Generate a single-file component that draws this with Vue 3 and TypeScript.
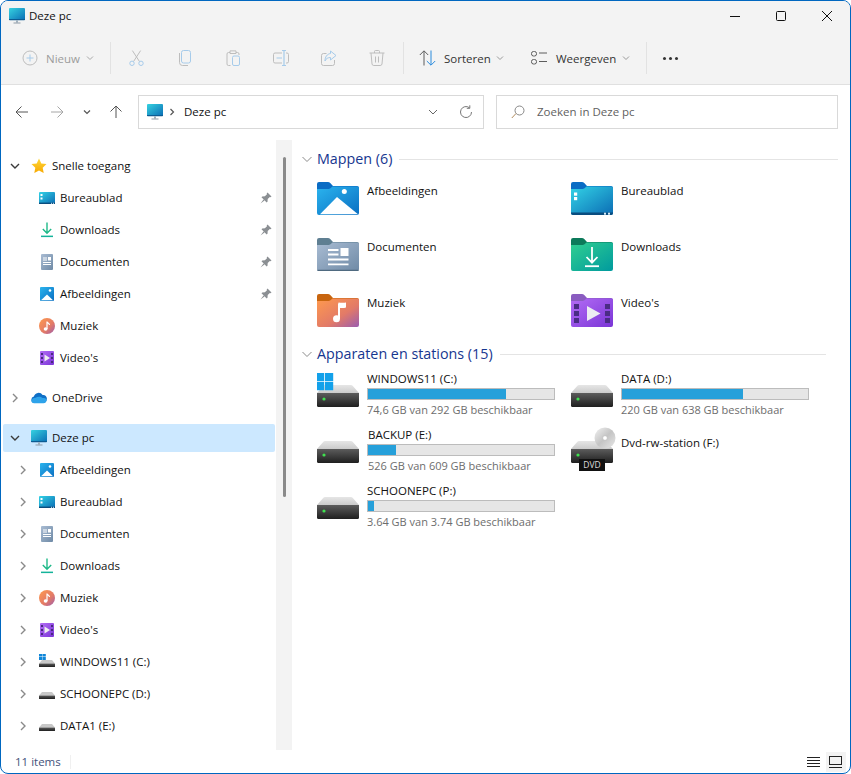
<script setup lang="ts">
interface TreeRow {
  label: string
  icon: string
  level: 0 | 1
  arrow?: 'down' | 'right'
  pinned?: boolean
  selected?: boolean
}

interface Drive {
  name: string
  icon: string
  used?: number
  info?: string
  nudge?: boolean
}

const tools = ['t-cut', 't-copy', 't-paste', 't-rename', 't-share', 't-delete']

const tree: TreeRow[][] = [
  [
    { label: 'Snelle toegang', icon: 's-star', level: 0, arrow: 'down' },
    { label: 'Bureaublad', icon: 's-desktop', level: 1, pinned: true },
    { label: 'Downloads', icon: 's-download', level: 1, pinned: true },
    { label: 'Documenten', icon: 's-doc', level: 1, pinned: true },
    { label: 'Afbeeldingen', icon: 's-pic', level: 1, pinned: true },
    { label: 'Muziek', icon: 's-music', level: 1 },
    { label: "Video's", icon: 's-video', level: 1 }
  ],
  [{ label: 'OneDrive', icon: 's-cloud', level: 0, arrow: 'right' }],
  [
    { label: 'Deze pc', icon: 's-pc', level: 0, arrow: 'down', selected: true },
    { label: 'Afbeeldingen', icon: 's-pic', level: 1, arrow: 'right' },
    { label: 'Bureaublad', icon: 's-desktop', level: 1, arrow: 'right' },
    { label: 'Documenten', icon: 's-doc', level: 1, arrow: 'right' },
    { label: 'Downloads', icon: 's-download', level: 1, arrow: 'right' },
    { label: 'Muziek', icon: 's-music', level: 1, arrow: 'right' },
    { label: "Video's", icon: 's-video', level: 1, arrow: 'right' },
    { label: 'WINDOWS11 (C:)', icon: 's-drive-win', level: 1, arrow: 'right' },
    { label: 'SCHOONEPC (D:)', icon: 's-drive', level: 1, arrow: 'right' },
    { label: 'DATA1 (E:)', icon: 's-drive', level: 1, arrow: 'right' }
  ]
]

const folders = [
  { name: 'Afbeeldingen', icon: 'f-pictures' },
  { name: 'Bureaublad', icon: 'f-desktop' },
  { name: 'Documenten', icon: 'f-docs' },
  { name: 'Downloads', icon: 'f-downloads' },
  { name: 'Muziek', icon: 'f-music' },
  { name: "Video's", icon: 'f-videos' }
]

const drives: Drive[] = [
  { name: 'WINDOWS11 (C:)', icon: 'd-win', used: 74, info: '74,6 GB van 292 GB beschikbaar' },
  { name: 'DATA (D:)', icon: 'd-plain', used: 65, info: '220 GB van 638 GB beschikbaar' },
  { name: 'BACKUP (E:)', icon: 'd-plain', used: 15, info: '526 GB van 609 GB beschikbaar', nudge: true },
  { name: 'Dvd-rw-station (F:)', icon: 'd-dvd' },
  { name: 'SCHOONEPC (P:)', icon: 'd-plain', used: 3, info: '3.64 GB van 3.74 GB beschikbaar' }
]
</script>

<template>
  <svg class="defs" aria-hidden="true">
    <defs>
      <linearGradient id="g-screen" x1="0" y1="0" x2="1" y2="1"><stop offset="0" stop-color="#36d2e0" /><stop offset="1" stop-color="#0a6db5" /></linearGradient>
      <linearGradient id="g-blue" x1="0" y1="0" x2="1" y2="1"><stop offset="0" stop-color="#2bb4ee" /><stop offset="1" stop-color="#0a6fc2" /></linearGradient>
      <linearGradient id="g-desk" x1="0" y1="0" x2="1" y2="1"><stop offset="0" stop-color="#33d3e6" /><stop offset="1" stop-color="#0b6cb4" /></linearGradient>
      <linearGradient id="g-doc" x1="0" y1="0" x2="1" y2="1"><stop offset="0" stop-color="#a9bcd3" /><stop offset="1" stop-color="#6f8aa6" /></linearGradient>
      <linearGradient id="g-green" x1="0" y1="0" x2="1" y2="1"><stop offset="0" stop-color="#30cf90" /><stop offset="1" stop-color="#009a9e" /></linearGradient>
      <linearGradient id="g-music" x1="0" y1="0" x2="1" y2="1"><stop offset="0" stop-color="#ff9a4d" /><stop offset=".6" stop-color="#e27a68" /><stop offset="1" stop-color="#9a5cb0" /></linearGradient>
      <linearGradient id="g-video" x1="0" y1="0" x2="1" y2="1"><stop offset="0" stop-color="#b36cf5" /><stop offset="1" stop-color="#7a35d6" /></linearGradient>
      <linearGradient id="g-hdd" x1="0" y1="0" x2="0" y2="1"><stop offset="0" stop-color="#5c5c5c" /><stop offset="1" stop-color="#1f1f1f" /></linearGradient>
      <linearGradient id="g-hddtop" x1="0" y1="0" x2="0" y2="1"><stop offset="0" stop-color="#e6e6e6" /><stop offset="1" stop-color="#cbcbcb" /></linearGradient>
      <linearGradient id="g-disc" x1="0" y1="0" x2="1" y2="1"><stop offset="0" stop-color="#f2f2f2" /><stop offset=".5" stop-color="#c4c4c4" /><stop offset="1" stop-color="#e8e8e8" /></linearGradient>
      <linearGradient id="g-star" x1="0" y1="0" x2="0" y2="1"><stop offset="0" stop-color="#ffd83a" /><stop offset="1" stop-color="#f7a800" /></linearGradient>

      <!-- toolbar -->
      <symbol id="t-cut" viewBox="0 0 16 16">
        <g fill="none"><path d="M4.6 11.4 11.6 .6M10.4 11.4 3.4 .6" stroke="#bdbdbd" /><circle cx="3" cy="13.3" r="2.2" stroke="#a6cbea" /><circle cx="12" cy="13.3" r="2.2" stroke="#a6cbea" /></g>
      </symbol>
      <symbol id="t-copy" viewBox="0 0 16 16">
        <g fill="none"><rect x="4.5" y=".5" width="9" height="12.5" rx="2" stroke="#a6cbea" /><path d="M2.5 3v9.5a3 3 0 0 0 3 3h5.5" stroke="#bdbdbd" /></g>
      </symbol>
      <symbol id="t-paste" viewBox="0 0 16 16">
        <g fill="none"><path d="M5 2.5H3.5a1.5 1.5 0 0 0-1.5 1.5v10a1.5 1.5 0 0 0 1.5 1.5h2M11 2.5h1.500a1.500 1.500 0 0 1 1.500 1.500v1M5 .9h6v2.600H5z" stroke="#bdbdbd" /><rect x="7.500" y="6" width="7" height="9.500" rx="1.500" stroke="#a6cbea" /></g>
      </symbol>
      <symbol id="t-rename" viewBox="0 0 16 16">
        <g fill="none"><path d="M9 3H2a1.500 1.500 0 0 0-1.500 1.500v7A1.500 1.500 0 0 0 2 13h7M13 3h1a1.500 1.500 0 0 1 1.500 1.500v7A1.500 1.500 0 0 1 14 13h-1" stroke="#bdbdbd" /><path d="M9 .5h4M11 .5v15M9 15.500h4M3.500 8H9" stroke="#a6cbea" stroke-width="1.200" /></g>
      </symbol>
      <symbol id="t-share" viewBox="0 0 16 16">
        <g fill="none"><path d="M13.500 10v3.500a2 2 0 0 1-2 2h-9a2 2 0 0 1-2-2v-8a2 2 0 0 1 2-2h3" stroke="#bdbdbd" /><path d="M9.500 1 15 5.500 9.500 10V7.500C7 7.500 5 8.500 4 11c0-4 2-7 5.500-7.500z" stroke="#a6cbea" stroke-linejoin="round" /></g>
      </symbol>
      <symbol id="t-delete" viewBox="0 0 16 16">
        <g fill="none" stroke="#bdbdbd"><path d="M.5 3h15M5.500 3V1.500a1 1 0 0 1 1-1h3a1 1 0 0 1 1 1V3M2 3l1 11a1.800 1.800 0 0 0 1.800 1.500h6.400A1.800 1.800 0 0 0 13 14l1-11M6.500 6.500v6M9.500 6.500v6" /></g>
      </symbol>
      <symbol id="t-new" viewBox="0 0 16 16">
        <g fill="none"><circle cx="8" cy="8" r="7" stroke="#bdbdbd" /><path d="M8 4.500v7M4.500 8h7" stroke="#a6cbea" /></g>
      </symbol>
      <symbol id="t-sort" viewBox="0 0 17 16">
        <g fill="none"><path d="M5 15.500V1M.8 5 5 .8 9.200 5" stroke="#5c5c5c" /><path d="M12 .5V15M7.800 11 12 15.200 16.200 11" stroke="#2a8bdc" /></g>
      </symbol>
      <symbol id="t-view" viewBox="0 0 16 16">
        <g fill="none" stroke="#5c5c5c"><rect x=".5" y="1.500" width="5" height="4.500" rx="2" /><rect x=".5" y="9.500" width="5" height="4.500" rx="2" /><path d="M8 3h8M8 11.500h8" /></g>
      </symbol>

      <!-- sidebar -->
      <symbol id="s-pc" viewBox="0 0 16 16">
        <rect y="0" width="16" height="12" rx="1" fill="url(#g-screen)" /><path d="M0 11h16v.5a.8.8 0 0 1-.8.8H.8a.8.8 0 0 1-.8-.8z" fill="#0c5c93" /><rect x="7" y="12.300" width="2" height="2.300" fill="#9fb0bd" /><rect x="4.500" y="14.500" width="7" height="1" fill="#8d9aa5" />
      </symbol>
      <symbol id="s-star" viewBox="0 0 16 16">
        <path d="M8 .5l2.300 4.900 5.200.7-3.800 3.700 1 5.300L8 12.500l-4.700 2.600 1-5.300L.5 6.100l5.200-.7z" fill="url(#g-star)" />
      </symbol>
      <symbol id="s-desktop" viewBox="0 0 16 16">
        <rect y="2" width="16" height="12" rx="1" fill="url(#g-desk)" /><rect y="12.600" width="16" height="1.400" fill="#0b4d7e" /><rect x="1.500" y="4" width="2" height="2" fill="#fff" /><rect x="1.500" y="7.500" width="2" height="2" fill="#fff" /><rect x="12" y="12.800" width="1" height="1" fill="#cfe8f5" /><rect x="14" y="12.800" width="1" height="1" fill="#cfe8f5" />
      </symbol>
      <symbol id="s-download" viewBox="0 0 16 16">
        <path d="M8 .5v10.500M3.800 7 8 11.200 12.200 7" fill="none" stroke="#1eb988" stroke-width="1.400" /><rect x="2" y="13.600" width="12" height="1.500" fill="#14b39a" />
      </symbol>
      <symbol id="s-doc" viewBox="0 0 16 16">
        <rect x="2" y="0" width="12" height="16" rx="1" fill="url(#g-doc)" /><path d="M4 4h4M4 6h4M4 8.500h8M4 10.500h8" stroke="#fff" /><rect x="9" y="3" width="3" height="3.500" fill="#fff" />
      </symbol>
      <symbol id="s-pic" viewBox="0 0 16 16">
        <rect x="1" y="1" width="14" height="14" rx="1" fill="url(#g-blue)" /><path d="M2 14.200 8 8.500 14 14.200z" fill="#fff" /><circle cx="11" cy="4.500" r="1.300" fill="#fff" />
      </symbol>
      <symbol id="s-music" viewBox="0 0 16 16">
        <circle cx="8" cy="8" r="8" fill="url(#g-music)" /><ellipse cx="6.600" cy="11" rx="1.900" ry="1.700" fill="#fff" /><path d="M8 11V3.500c0 1.500 2.500 1.500 2.500 3.500" fill="none" stroke="#fff" stroke-width="1.200" />
      </symbol>
      <symbol id="s-video" viewBox="0 0 16 16">
        <rect x="1" y="1" width="14" height="14" rx="1" fill="url(#g-video)" /><path d="M2 3h2v2H2zM2 7h2v2H2zM2 11h2v2H2zM12 3h2v2h-2zM12 7h2v2h-2zM12 11h2v2h-2z" fill="#4a2a80" /><path d="M5.500 4.500 11 8l-5.500 3.500z" fill="#eee" />
      </symbol>
      <symbol id="s-cloud" viewBox="0 0 16 16">
        <path d="M3.500 13a3.300 3.300 0 0 1-.6-6.500A4.800 4.800 0 0 1 11.600 5 3.500 3.500 0 0 1 15.800 9c0 2.200-1.400 4-3.300 4z" fill="#0f6fc6" /><path d="M3.500 13.300a3 3 0 0 1-3.200-2.700c.5-1.500 2-2.800 4.200-2.800 2-1.500 5.500-1.500 7 .3 2 0 3.400.3 4.200 1.300 0 2.200-1.500 3.900-3.200 3.900z" fill="#2ea3ea" />
      </symbol>
      <symbol id="s-drive" viewBox="0 0 16 16">
        <path d="M3 6h10l3 3.500H0z" fill="#c8c8c8" /><rect y="9.500" width="16" height="3.500" rx=".5" fill="url(#g-hdd)" />
      </symbol>
      <symbol id="s-drive-win" viewBox="0 0 16 16">
        <path d="M3 6h10l3 3.500H0z" fill="#c8c8c8" /><rect y="9.500" width="16" height="3.500" rx=".5" fill="url(#g-hdd)" />
        <path d="M0-.5h3.200v3H0zM3.600-.5h3.200v3H3.600zM0 3h3.200v3H0zM3.600 3h3.200v3H3.600z" fill="#0f86d8" />
      </symbol>

      <!-- folders -->
      <symbol id="f-base" viewBox="0 0 42 33">
        <path d="M2 0h9a3 3 0 0 1 2 .8L16 4h24a2 2 0 0 1 2 2v8H0V2a2 2 0 0 1 2-2z" />
      </symbol>
      <symbol id="f-pictures" viewBox="0 0 42 33">
        <use href="#f-base" fill="#0a6cc4" />
        <path d="M0 7h11.500a3 3 0 0 0 2-.8L15.500 4.500H40.500A1.500 1.500 0 0 1 42 6v25a2 2 0 0 1-2 2H2a2 2 0 0 1-2-2z" fill="url(#g-blue)" />
        <path d="M3 32.200 20 15 41 32.200z" fill="#fff" /><circle cx="27.300" cy="9.600" r="2.500" fill="#fff" />
      </symbol>
      <symbol id="f-desktop" viewBox="0 0 42 33">
        <use href="#f-base" fill="#0a6cc4" />
        <path d="M0 7h11.500a3 3 0 0 0 2-.8L15.500 4.500H40.500A1.500 1.500 0 0 1 42 6v25a2 2 0 0 1-2 2H2a2 2 0 0 1-2-2z" fill="url(#g-desk)" />
        <path d="M0 30.500h42V31a2 2 0 0 1-2 2H2a2 2 0 0 1-2-2z" fill="#0a4d7f" />
        <rect x="3" y="10.500" width="3.200" height="3.200" fill="#fff" /><rect x="3" y="15" width="3.200" height="3.200" fill="#fff" /><rect x="33" y="30.700" width="2" height="2" fill="#d5ecf7" /><rect x="37" y="30.700" width="2" height="2" fill="#d5ecf7" />
      </symbol>
      <symbol id="f-docs" viewBox="0 0 42 33">
        <use href="#f-base" fill="#5f7f92" />
        <path d="M0 7h11.500a3 3 0 0 0 2-.8L15.500 4.500H40.500A1.500 1.500 0 0 1 42 6v25a2 2 0 0 1-2 2H2a2 2 0 0 1-2-2z" fill="url(#g-doc)" />
        <path d="M0 31.800h42V31.500a1.500 1.500 0 0 1-1.500 1.500H1.500A1.500 1.500 0 0 1 0 31.500z" fill="#4f6a80" />
        <path d="M11 12h10.500M11 16.500h10.500M11 21.500h20.500M11 26.300h20.500" stroke="#fff" stroke-width="1.800" /><rect x="23.500" y="10" width="8" height="8" fill="#fff" />
      </symbol>
      <symbol id="f-downloads" viewBox="0 0 42 33">
        <use href="#f-base" fill="#0c7a5a" />
        <path d="M0 7h11.500a3 3 0 0 0 2-.8L15.500 4.500H40.500A1.500 1.500 0 0 1 42 6v25a2 2 0 0 1-2 2H2a2 2 0 0 1-2-2z" fill="url(#g-green)" />
        <path d="M21 9v15.500M15.500 19 21 24.700 26.500 19" fill="none" stroke="#fff" stroke-width="1.800" /><rect x="14" y="27.300" width="14" height="1.800" fill="#fff" />
      </symbol>
      <symbol id="f-music" viewBox="0 0 42 33">
        <use href="#f-base" fill="#c8650f" />
        <path d="M0 7h11.500a3 3 0 0 0 2-.8L15.500 4.500H40.500A1.500 1.500 0 0 1 42 6v25a2 2 0 0 1-2 2H2a2 2 0 0 1-2-2z" fill="url(#g-music)" />
        <circle cx="19.500" cy="24.800" r="3.500" fill="#fff" /><path d="M22 25V9.500" stroke="#fff" stroke-width="2" fill="none" /><path d="M21.500 8.500c2 0 4 .6 7.500 0v5c-3 1-5.500 .5-7.500 0z" fill="#fff" />
      </symbol>
      <symbol id="f-videos" viewBox="0 0 42 33">
        <use href="#f-base" fill="#8a5cc0" />
        <path d="M0 7h11.500a3 3 0 0 0 2-.8L15.500 4.500H40.500A1.500 1.500 0 0 1 42 6v25a2 2 0 0 1-2 2H2a2 2 0 0 1-2-2z" fill="url(#g-video)" />
        <path d="M3 10h5v5H3zM3 17h5v5H3zM3 24h5v5H3zM34 10h5v5h-5zM34 17h5v5h-5zM34 24h5v5h-5z" fill="#4a2c85" /><path d="M16 12 29.500 19.500 16 27z" fill="#ececf2" />
      </symbol>

      <!-- drives, 46x36 -->
      <symbol id="d-base" viewBox="0 0 46 36">
        <path d="M8 14h26a2 2 0 0 1 1.600 .8L42 22H0l6.400-7.200A2 2 0 0 1 8 14z" fill="url(#g-hddtop)" />
        <path d="M0 22h42v12.500a1.500 1.500 0 0 1-1.500 1.500H1.500A1.500 1.500 0 0 1 0 34.500z" fill="url(#g-hdd)" />
        <circle cx="7" cy="28" r="1.600" fill="#3fe04f" />
      </symbol>
      <symbol id="d-plain" viewBox="0 0 46 36"><use href="#d-base" /></symbol>
      <symbol id="d-win" viewBox="0 0 46 36">
        <use href="#d-base" />
        <path d="M-1 2h8.200v8.200H-1zM8 2h8.200v8.200H8zM-1 11h8.200v8.200H-1zM8 11h8.200v8.200H8z" fill="#13a1ea" />
      </symbol>
      <symbol id="d-dvd" viewBox="0 0 46 36">
        <use href="#d-base" />
        <circle cx="34" cy="11" r="10.500" fill="url(#g-disc)" />
        <circle cx="34" cy="11" r="2.300" fill="#fff" stroke="#bbb" stroke-width=".6" />
      </symbol>
    </defs>
  </svg>

  <div class="window">
    <header class="titlebar">
      <svg class="ic16"><use href="#s-pc" /></svg>
      <span class="title">Deze pc</span>
      <div class="caption">
        <button class="cap-btn"><svg width="12" height="12" viewBox="0 0 12 12"><path d="M1 6.500h10" stroke="#111" /></svg></button>
        <button class="cap-btn"><svg width="12" height="12" viewBox="0 0 12 12"><rect x="1.500" y="1.500" width="9" height="9" rx="1" fill="none" stroke="#111" /></svg></button>
        <button class="cap-btn"><svg width="12" height="12" viewBox="0 0 12 12"><path d="M1 1l10 10M11 1 1 11" stroke="#111" /></svg></button>
      </div>
    </header>

    <div class="toolbar">
      <div class="tb-new">
        <svg class="ic16"><use href="#t-new" /></svg>
        <span class="off">Nieuw</span>
        <svg class="chev" viewBox="0 0 8 8"><path d="M1 2.500 4 5.500 7 2.500" fill="none" stroke="#a8a8a8" /></svg>
      </div>
      <i class="sep"></i>
      <div v-for="tool in tools" :key="tool" class="tb-tool"><svg class="ic16"><use :href="'#' + tool" /></svg></div>
      <i class="sep"></i>
      <div class="tb-sort">
        <svg class="ic-sort"><use href="#t-sort" /></svg>
        <span>Sorteren</span>
        <svg class="chev" viewBox="0 0 8 8"><path d="M1 2.500 4 5.500 7 2.500" fill="none" stroke="#9a9a9a" /></svg>
      </div>
      <div class="tb-view">
        <svg class="ic16"><use href="#t-view" /></svg>
        <span>Weergeven</span>
        <svg class="chev" viewBox="0 0 8 8"><path d="M1 2.500 4 5.500 7 2.500" fill="none" stroke="#9a9a9a" /></svg>
      </div>
      <i class="sep"></i>
      <div class="tb-more"><b></b><b></b><b></b></div>
    </div>

    <div class="addressrow">
      <div class="nav">
        <svg width="14" height="14" viewBox="0 0 14 14"><path d="M13 7H1M6.500 1.500 1 7l5.500 5.500" fill="none" stroke="#555" /></svg>
        <svg width="14" height="14" viewBox="0 0 14 14"><path d="M1 7h12M7.500 1.500 13 7l-5.500 5.500" fill="none" stroke="#a6a6a6" /></svg>
        <svg width="8" height="8" viewBox="0 0 8 8"><path d="M1 2.500 4 5.500 7 2.500" fill="none" stroke="#555" stroke-width="1.200" /></svg>
        <svg width="14" height="14" viewBox="0 0 14 14"><path d="M7 13V1M1.500 6.500 7 1l5.500 5.500" fill="none" stroke="#555" /></svg>
      </div>
      <div class="address">
        <svg class="ic16"><use href="#s-pc" /></svg>
        <svg class="crumb" width="6" height="8" viewBox="0 0 6 8"><path d="M1.500 1 4.500 4 1.500 7" fill="none" stroke="#555" stroke-width="1.200" /></svg>
        <span class="addr-text">Deze pc</span>
        <svg class="addr-chev" width="10" height="10" viewBox="0 0 10 10"><path d="M1 3 5 7 9 3" fill="none" stroke="#666" /></svg>
        <svg class="addr-refresh" width="14" height="14" viewBox="0 0 14 14"><path d="M12.500 7A5.500 5.500 0 1 1 10.500 2.800M10.800 .3v3h-3" fill="none" stroke="#777" /></svg>
      </div>
      <div class="search">
        <svg width="14" height="14" viewBox="0 0 14 14"><circle cx="8.500" cy="5.500" r="4.500" fill="none" stroke="#888" /><path d="M5 8.500.8 13" stroke="#b08a5c" /></svg>
        <span>Zoeken in Deze pc</span>
      </div>
    </div>

    <div class="main">
      <nav class="sidebar">
        <div v-for="(group, g) in tree" :key="g" class="tree-group">
          <div v-for="row in group" :key="row.label" class="tree-row" :class="['lv' + row.level, { selected: row.selected }]">
            <span class="arrow">
              <svg v-if="row.arrow === 'down'" width="10" height="10" viewBox="0 0 10 10"><path d="M1 3 5 7 9 3" fill="none" stroke="#3a3a3a" stroke-width="1.400" /></svg>
              <svg v-else-if="row.arrow === 'right'" width="10" height="10" viewBox="0 0 10 10"><path d="M3 1 7 5 3 9" fill="none" stroke="#8a8a8a" stroke-width="1.400" /></svg>
            </span>
            <svg class="ic16"><use :href="'#' + row.icon" /></svg>
            <span class="tree-label">{{ row.label }}</span>
            <svg v-if="row.pinned" class="pin" width="12" height="12" viewBox="0 0 12 12"><path d="M7.500 .5 11.500 4.500 10.500 5.300 9.800 5 7.700 7.100 7.500 9.800 6.700 10.500 1.500 5.300 2.200 4.500 4.900 4.300 7 2.200 6.700 1.500zM3.500 7.500.5 11.500 4.500 8.500z" fill="#8b8f93" /></svg>
          </div>
        </div>
      </nav>
      <div class="scroll"><div class="thumb"></div></div>

      <section class="content">
        <div class="group-head">
          <svg width="10" height="10" viewBox="0 0 10 10"><path d="M.5 3 5 7.500 9.500 3" fill="none" stroke="#8a8a8a" /></svg>
          <span>Mappen (6)</span><i></i>
        </div>
        <div class="folders">
          <div v-for="f in folders" :key="f.name" class="folder">
            <svg class="ic-folder"><use :href="'#' + f.icon" /></svg>
            <span>{{ f.name }}</span>
          </div>
        </div>

        <div class="group-head short">
          <svg width="10" height="10" viewBox="0 0 10 10"><path d="M.5 3 5 7.500 9.500 3" fill="none" stroke="#8a8a8a" /></svg>
          <span>Apparaten en stations (15)</span><i></i>
        </div>
        <div class="drives">
          <div v-for="d in drives" :key="d.name" class="drive">
            <div class="drive-icon">
              <svg class="ic-drive"><use :href="'#' + d.icon" /></svg>
              <span v-if="d.icon === 'd-dvd'" class="dvd-tag">DVD</span>
            </div>
            <div class="drive-text" :class="{ solo: d.used === undefined, nudge: d.nudge }">
              <div class="drive-name">{{ d.name }}</div>
              <template v-if="d.used !== undefined">
                <div class="bar"><div class="bar-fill" :style="{ width: d.used + '%' }"></div></div>
                <div class="drive-info">{{ d.info }}</div>
              </template>
            </div>
          </div>
        </div>
      </section>
    </div>

    <footer class="status">
      <span class="count">11 items</span>
      <i class="status-sep"></i>
      <svg class="view-list" width="13" height="12" viewBox="0 0 13 12"><path d="M0 1.500h13M0 4.500h13M0 7.500h13M0 10.500h13" stroke="#222" /></svg>
      <span class="view-tile"><svg width="14" height="12" viewBox="0 0 14 12"><rect x=".5" y=".5" width="12" height="8" fill="none" stroke="#222" /><path d="M0 11.500h13" stroke="#222" /></svg></span>
    </footer>
  </div>
</template>

<style>
html, body { margin: 0; background: #fff; }
</style>

<style scoped>
.defs { display: block; width: 0; height: 0; }

.window {
  box-sizing: border-box;
  width: 851px;
  height: 774px;
  border: 1px solid #0067c0;
  border-radius: 8px;
  overflow: hidden;
  display: flex;
  flex-direction: column;
  background: #fff;
  font-family: "Open Sans", "Noto Sans", sans-serif;
  font-size: 11.5px;
  color: #111;
}

.ic16 { width: 16px; height: 16px; flex: none; overflow: visible; }
.chev { width: 8px; height: 8px; flex: none; }

.titlebar {
  height: 35px;
  flex: none;
  box-sizing: border-box;
  padding: 0 0 5px 8px;
  display: flex;
  align-items: center;
  background: #f3f3f3;
}
.title { margin-left: 4px; padding-bottom: 2px; }
.caption { margin-left: auto; display: flex; }
.cap-btn {
  width: 46px;
  height: 30px;
  border: 0;
  padding: 0;
  background: none;
  display: flex;
  align-items: center;
  justify-content: center;
}

.toolbar {
  height: 49px;
  flex: none;
  box-sizing: border-box;
  display: flex;
  align-items: center;
  padding: 0 0 4px 8px;
  background: #f3f3f3;
  border-bottom: 1px solid #e0e0e0;
}
.sep { width: 1px; height: 32px; background: #e2e2e2; flex: none; }
.tb-new { width: 101px; box-sizing: border-box; padding-left: 13px; display: flex; align-items: center; gap: 8px; }
.tb-new .chev { margin-left: -2px; }
.off { color: #9c9c9c; }
.tb-tool { width: 48px; display: flex; justify-content: center; }
.sep + .tb-tool { margin-left: 2px; }
.tb-tool + .sep { margin-left: 2px; }
.tb-sort { width: 115px; box-sizing: border-box; padding-left: 15px; display: flex; align-items: center; gap: 8px; color: #333; }
.tb-sort .chev { margin-left: -3px; }
.ic-sort { width: 17px; height: 16px; flex: none; }
.tb-view { width: 127px; box-sizing: border-box; padding-left: 12px; display: flex; align-items: center; gap: 8px; color: #333; }
.tb-view span { margin-left: 1px; }
.tb-view .chev { margin-left: -2px; }
.tb-more { margin-left: 16px; display: flex; gap: 3px; }
.tb-more b { width: 3px; height: 3px; border-radius: 50%; background: #333; }

.addressrow {
  height: 55px;
  flex: none;
  box-sizing: border-box;
  padding-top: 10px;
  display: flex;
  align-items: flex-start;
}
.nav {
  width: 137px;
  height: 34px;
  flex: none;
  box-sizing: border-box;
  padding-left: 14px;
  display: flex;
  align-items: center;
}
.nav svg:nth-child(2) { margin-left: 21px; }
.nav svg:nth-child(3) { margin-left: 19px; }
.nav svg:nth-child(4) { margin-left: 18px; }
.address, .search {
  height: 34px;
  box-sizing: border-box;
  border: 1px solid #d9d9d9;
  display: flex;
  align-items: center;
}
.address { width: 346px; padding: 0 0 1px 8px; }
.crumb { margin-left: 6px; }
.addr-text { margin-left: 9px; }
.addr-chev { margin-left: auto; }
.addr-refresh { margin: 0 10px 0 21px; }
.search { width: 342px; margin-left: 12px; padding: 0 0 1px 14px; gap: 12px; color: #5f5f5f; }

.main { flex: 1; min-height: 0; display: flex; }
.sidebar {
  width: 275px;
  flex: none;
  box-sizing: border-box;
  padding-top: 10px;
  overflow: hidden;
  display: flex;
  flex-direction: column;
  gap: 8px;
}
.tree-group { display: flex; flex-direction: column; gap: 4px; padding: 2px 0; }
.tree-row {
  height: 28px;
  flex: none;
  margin: 0 1px 0 2px;
  border-radius: 2px;
  display: flex;
  align-items: center;
}
.tree-row.selected { background: #cce8ff; }
.arrow { width: 10px; height: 10px; display: flex; flex: none; }
.arrow svg { display: block; }
.lv0 .arrow { margin: 0 11px 0 7px; }
.lv1 .arrow { margin: 0 11px 0 15px; }
.tree-label { margin-left: 5px; padding-bottom: 1px; }
.pin { margin-left: auto; margin-right: 3px; }

.scroll { width: 16px; flex: none; background: #f3f3f3; padding-top: 17px; box-sizing: border-box; }
.thumb { width: 3px; height: 340px; margin-left: 7px; border-radius: 2px; background: #8a8a8a; }

.content { flex: 1; min-width: 0; box-sizing: border-box; padding: 9px 12px 0 10px; }
.group-head { height: 20px; display: flex; align-items: center; font-size: 14.3px; color: #16368f; }
.group-head span { padding-bottom: 1px; }
.group-head svg { margin-right: 5px; flex: none; }
.group-head i { flex: 1; height: 1px; margin-left: 7px; background: #e4e4e4; }
.group-head.short { margin-right: 12px; }

.folders {
  margin: 13px 0 0 15px;
  display: grid;
  grid-template-columns: 254px 254px;
  grid-auto-rows: 50px;
  row-gap: 6px;
}
.folder { display: flex; align-items: flex-start; gap: 8px; }
.folder span { line-height: 16px; padding-top: 1px; }
.ic-folder { width: 42px; height: 33px; flex: none; }

.drives {
  margin: 7px 0 0 15px;
  display: grid;
  grid-template-columns: 254px 254px;
  grid-auto-rows: 50px;
  row-gap: 6px;
}
.drive { display: flex; align-items: flex-start; }
.drive-icon { position: relative; width: 46px; height: 36px; flex: none; }
.ic-drive { width: 46px; height: 36px; display: block; overflow: visible; }
.dvd-tag {
  position: absolute;
  left: 8px;
  top: 32px;
  width: 26px;
  height: 12px;
  background: #111;
  color: #ddd;
  font-size: 8.5px;
  line-height: 12px;
  text-align: center;
}
.drive-text { margin-left: 4px; width: 188px; }
.drive-text.solo { padding-top: 8px; }
.drive-text.nudge .drive-name, .drive-text.nudge .drive-info { margin-left: 1px; }
.drive-name { line-height: 16px; }
.bar { height: 12px; box-sizing: border-box; margin-top: 1px; border: 1px solid #bcbcbc; background: #e6e6e6; }
.bar-fill { height: 100%; background: #26a0da; }
.drive-info { margin-top: 2px; line-height: 16px; font-size: 11px; color: #6d6d6d; white-space: nowrap; }

.status {
  height: 23px;
  flex: none;
  display: flex;
  align-items: center;
  padding-left: 14px;
}
.count { color: #44527a; }
.status-sep { width: 1px; height: 14px; margin-left: 9px; background: #f0f0f0; }
.view-list { margin-left: auto; }
.view-tile { width: 20px; height: 20px; margin: 0 4px 0 6px; display: flex; align-items: center; justify-content: center; background: #f3f3f3; }
</style>
